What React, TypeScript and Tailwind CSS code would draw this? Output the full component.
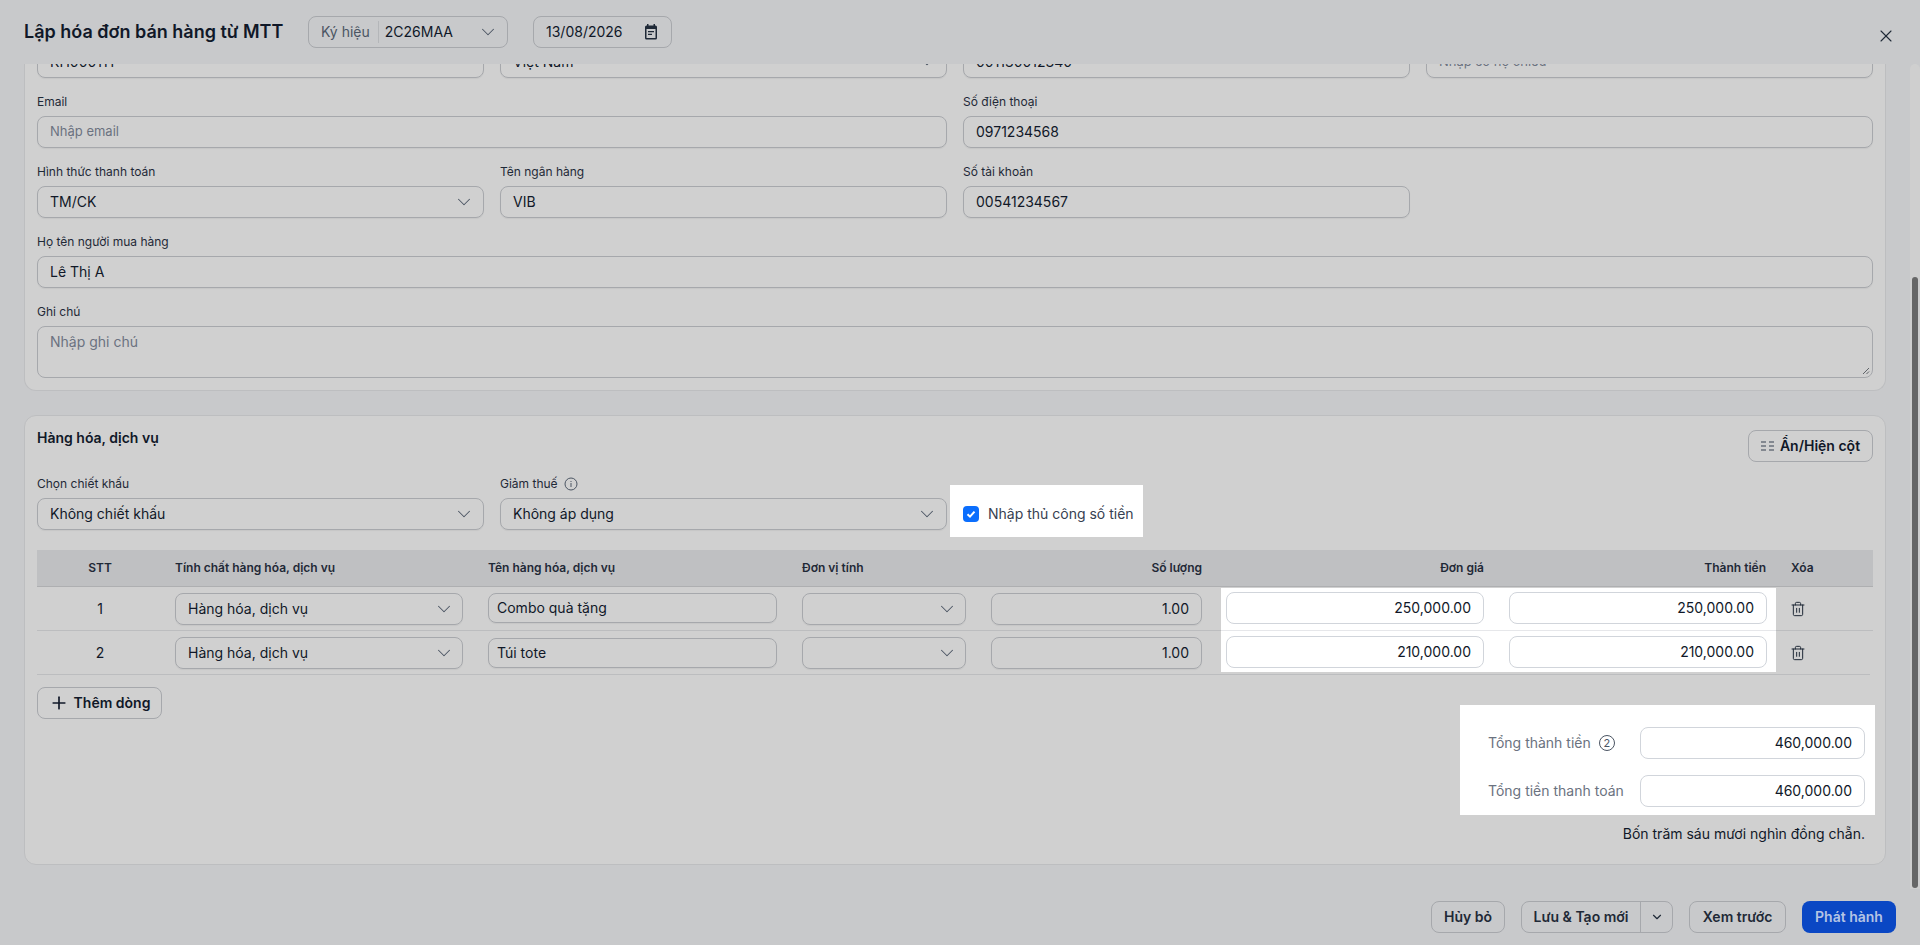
import { ChevronDown, Plus, Trash2, X } from 'lucide-react';

const fieldBox = 'h-8 rounded-lg border border-[#a6a8ac] shadow-[0_1px_1px_rgba(0,0,0,0.05)] flex items-center text-sm text-[#101828]';
const moneyBox = 'h-8 flex-1 rounded-lg border border-[#d1d5db] flex items-center justify-end px-3 text-sm text-[#101828]';

function Chevron({ className = '-mr-[4px]' }: { className?: string }) {
  return <ChevronDown size={22} strokeWidth={1.1} className={`text-[#4b5563] ${className}`} />;
}

function Field({ label, value, placeholder, select, className = '' }: { label?: string; value?: string; placeholder?: string; select?: boolean; className?: string }) {
  return (
    <div className={`min-w-0 ${className}`}>
      {label && <div className="text-xs leading-4 mb-[6px] text-[#1f2937]">{label}</div>}
      <div className={`${fieldBox} px-3 justify-between`}>
        <span className={value ? '' : 'text-[13px] -mt-[2px] text-[#6b7280]'}>{value || placeholder}</span>
        {select && <Chevron />}
      </div>
    </div>
  );
}

function TableRow({ index, name, price, last }: { index: number; name: string; price: string; last?: boolean }) {
  return (
    <div className={`flex h-11 border-b border-[#bcbdbf] text-sm text-[#101828] ${last ? 'mr-[3px]' : ''}`}>
      <div className="w-[126px] flex items-center justify-center">{index}</div>
      <div className="w-[312px] px-3 flex items-center">
        <div className={`${fieldBox} w-full px-3 justify-between`}>
          <span>Hàng hóa, dịch vụ</span>
          <Chevron className="-mr-[5px]" />
        </div>
      </div>
      <div className="w-[314px] pl-[13px] pr-[12px] flex items-center">
        <div className={`${fieldBox} w-full h-[30px] px-2 ${last ? '' : '-mt-px'}`}>{name}</div>
      </div>
      <div className="w-[188px] pl-[13px] pr-[11px] flex items-center">
        <div className={`${fieldBox} w-full justify-end px-3`}>
          <Chevron className="-mr-[5px]" />
        </div>
      </div>
      <div className="w-[236px] pl-[14px] pr-[11px] flex items-center">
        <div className={`${fieldBox} w-full justify-end px-3`}>1.00</div>
      </div>
      <div className={`w-[555px] ml-[8px] flex items-start gap-[25px] pl-[5px] pr-[9px] bg-white relative ${last ? 'mb-[2px] pt-[5px]' : 'mt-px -mb-px pt-[4px] border-b border-[#e6e7ea]'}`}>
        <div className={moneyBox}>{price}</div>
        <div className={moneyBox}>{price}</div>
      </div>
      <div className="pl-[14px] flex items-center">
        <Trash2 size={16} strokeWidth={1.5} className="text-[#1f2937]" />
      </div>
    </div>
  );
}

export default function App() {
  return (
    <div className="h-[945px] w-[1920px] overflow-hidden bg-[#c8c9cb] flex flex-col font-['Inter',sans-serif]">
      <div className="h-16 shrink-0 flex items-center px-6 bg-[#c8c9cb] relative z-10">
        <h1 className="text-lg font-semibold text-[#101828] w-[284px]">Lập hóa đơn bán hàng từ MTT</h1>
        <div className="h-8 w-[200px] rounded-lg border border-[#a6a8ac] flex items-center text-sm">
          <span className="pl-3 pr-2 text-[#4b5563] flex items-center">Ký hiệu</span>
          <span className="h-[22px] w-px bg-[#b4b6b9]" />
          <span className="pl-[6px] flex-1 text-[#101828]">2C26MAA</span>
          <Chevron className="mr-[8px]" />
        </div>
        <div className="h-8 w-[139px] ml-[25px] rounded-lg border border-[#a6a8ac] flex items-center justify-between pl-3 pr-[12px] text-sm text-[#101828]">
          <span>13/08/2026</span>
          <svg width="16" height="18" viewBox="0 0 16 18" className="text-[#1f2937]">
            <path fill="currentColor" d="M4 1h1.5v1.5h5V1H12v1.5h.5A1.5 1.5 0 0 1 14 4v11a1.5 1.5 0 0 1-1.5 1.5h-9A1.5 1.5 0 0 1 2 15V4a1.5 1.5 0 0 1 1.5-1.5H4V1ZM3.5 6v9h9V6h-9ZM5 8h6v1.3H5V8Zm0 2.7h4V12H5v-1.3Z" />
          </svg>
        </div>
        <X size={20} strokeWidth={1.3} className="ml-auto mt-2 text-[#1f2937]" />
      </div>

      <div className="flex-1 min-h-0 flex">
        <div className="flex-1 min-w-0 overflow-hidden pl-6">
          <div className="-mt-[18px] w-[1862px] rounded-b-xl border border-t-0 border-[#bdbec0] bg-[#d0d0d0] px-3 pb-3">
            <div className="grid grid-cols-4 gap-4">
              <Field value="KH00011T" />
              <Field value="Việt Nam" select />
              <Field value="001130012340" />
              <Field placeholder="Nhập số hộ chiếu" />
              <Field label="Email" placeholder="Nhập email" className="col-span-2" />
              <Field label="Số điện thoại" value="0971234568" className="col-span-2" />
              <Field label="Hình thức thanh toán" value="TM/CK" select />
              <Field label="Tên ngân hàng" value="VIB" />
              <Field label="Số tài khoản" value="00541234567" className="col-span-2 w-[447px]" />
              <Field label="Họ tên người mua hàng" value="Lê Thị A" className="col-span-4" />
              <div className="col-span-4">
                <div className="text-xs leading-4 mb-[6px] text-[#1f2937]">Ghi chú</div>
                <div className="h-[52px] rounded-lg border border-[#a6a8ac] px-3 pt-[5px] text-sm text-[#6b7280] relative">
                  Nhập ghi chú
                  <svg width="8" height="8" viewBox="0 0 8 8" className="absolute right-[2px] bottom-[2px] text-[#5f6368]">
                    <path d="M7 1 1 7M7 4.5 4.5 7" stroke="currentColor" fill="none" />
                  </svg>
                </div>
              </div>
            </div>
          </div>

          <div className="mt-6 w-[1862px] h-[450px] rounded-xl border border-[#bdbec0] bg-[#d0d0d0] px-3">
            <div className="flex justify-between items-start pt-[14px] h-[60px]">
              <h2 className="text-sm font-semibold text-[#101828] leading-4">Hàng hóa, dịch vụ</h2>
              <button className="h-8 w-[125px] rounded-lg border border-[#a6a8ac] flex items-center justify-center gap-[6px] text-sm font-semibold text-[#101828]">
                <svg width="13" height="10" viewBox="0 0 13 10" className="text-[#374151]">
                  <path d="M0 1h5M0 5h5M0 9h5M8 1h5M8 5h5M8 9h5" stroke="currentColor" strokeWidth="1" fill="none" />
                </svg>
                Ẩn/Hiện cột
              </button>
            </div>

            <div className="flex gap-4 items-start">
              <div className="w-[447px]">
                <Field label="Chọn chiết khấu" value="Không chiết khấu" select />
              </div>
              <div className="w-[447px]">
                <div className="text-xs leading-4 mb-[6px] text-[#1f2937] flex items-center gap-[6px]">
                  Giảm thuế
                  <svg width="14" height="14" viewBox="0 0 14 14" className="text-[#4b5563]">
                    <circle cx="7" cy="7" r="6" stroke="currentColor" fill="none" />
                    <path d="M7 6v4M7 4v1" stroke="currentColor" fill="none" />
                  </svg>
                </div>
                <div className={`${fieldBox} px-3 justify-between`}>
                  <span>Không áp dụng</span>
                  <Chevron />
                </div>
              </div>
              <label className="-ml-[13px] mt-[9px] h-[52px] w-[193px] bg-white flex items-center gap-[9px] pl-[13px] pt-[5px] text-sm text-[#374151]">
                <span className="w-4 h-4 rounded-[4px] bg-[#0b6efd] flex items-center justify-center">
                  <svg width="12" height="12" viewBox="0 0 12 12"><path d="M2.5 6.2 5 8.6l4.5-5" stroke="white" strokeWidth="2" fill="none" /></svg>
                </span>
                Nhập thủ công số tiền
              </label>
            </div>

            <div className="mt-[13px]">
              <div className="flex h-[37px] bg-[#bfc0c2] border-b border-[#aeafb1] text-xs font-semibold text-[#1f2937] items-center">
                <div className="w-[126px] text-center">STT</div>
                <div className="w-[312px] px-3">Tính chất hàng hóa, dịch vụ</div>
                <div className="w-[314px] pl-[13px] pr-[12px]">Tên hàng hóa, dịch vụ</div>
                <div className="w-[188px] pl-[13px] pr-[11px]">Đơn vị tính</div>
                <div className="w-[236px] px-[11px] text-right">Số lượng</div>
                <div className="w-[283px] px-3 text-right">Đơn giá</div>
                <div className="w-[282px] px-3 text-right">Thành tiền</div>
                <div className="pl-[13px]">Xóa</div>
              </div>
              <TableRow index={1} name="Combo quà tặng" price="250,000.00" />
              <TableRow index={2} name="Túi tote" price="210,000.00" last />
            </div>

            <div className="flex justify-between items-start">
              <button className="mt-3 h-8 w-[125px] rounded-lg border border-[#a6a8ac] flex items-center justify-center gap-[5px] text-sm font-semibold text-[#101828]">
                <Plus size={20} strokeWidth={2} />
                Thêm dòng
              </button>
              <div className="mt-[30px] -mr-[2px] w-[415px] flex flex-col items-end">
                <div className="w-full h-[110px] bg-white pl-7 pr-[10px] pt-[22px] flex flex-col gap-4 text-sm">
                  <div className="flex items-center h-8">
                    <span className="w-[152px] text-[#6b7280] flex items-center gap-2">
                      Tổng thành tiền
                      <span className="w-4 h-4 rounded-full border border-[#4b5563] text-[11px] leading-none text-[#4b5563] flex items-center justify-center">2</span>
                    </span>
                    <div className={moneyBox}>460,000.00</div>
                  </div>
                  <div className="flex items-center h-8">
                    <span className="w-[152px] text-[#6b7280]">Tổng tiền thanh toán</span>
                    <div className={moneyBox}>460,000.00</div>
                  </div>
                </div>
                <div className="mt-[9px] mr-[10px] text-sm text-[#101828]">Bốn trăm sáu mươi nghìn đồng chẵn.</div>
              </div>
            </div>
          </div>
        </div>

        <div className="w-[10px] shrink-0 bg-[#cfcfcf] rounded-t-md flex justify-center">
          <div className="mt-[213px] w-[6px] h-[611px] rounded-full bg-[#676767]" />
        </div>
      </div>

      <div className="h-14 shrink-0 flex items-center justify-end gap-4 pr-6 text-sm font-semibold text-[#1f2937]">
        <button className="h-8 w-[74px] rounded-lg border border-[#a6a8ac]">Hủy bỏ</button>
        <div className="h-8 w-[152px] rounded-lg border border-[#a6a8ac] flex">
          <button className="flex-1 border-r border-[#a6a8ac]">Lưu & Tạo mới</button>
          <button className="w-[31px] flex items-center justify-center"><ChevronDown size={14} strokeWidth={2} /></button>
        </div>
        <button className="h-8 w-[97px] rounded-lg border border-[#a6a8ac]">Xem trước</button>
        <button className="h-8 w-[94px] rounded-lg bg-[#0a47c4] text-[#b4c4e4]">Phát hành</button>
      </div>
    </div>
  );
}
